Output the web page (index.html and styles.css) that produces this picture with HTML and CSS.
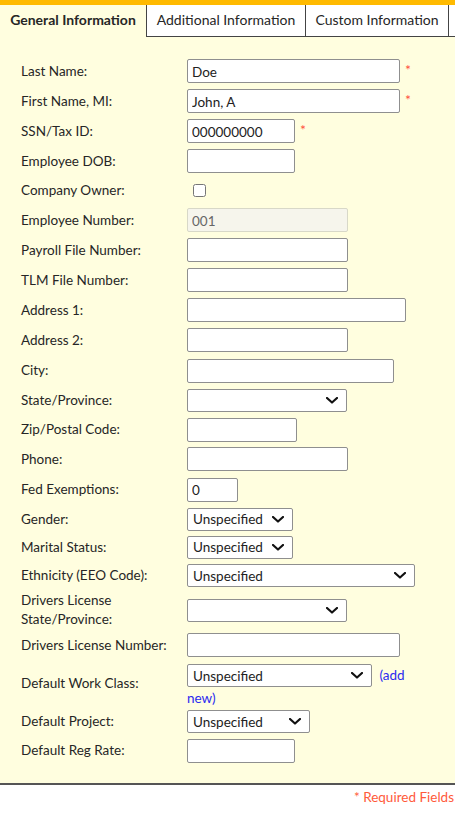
FILE: index.html
```html
<!DOCTYPE html>
<html>
<head>
<meta charset="utf-8">
<link rel="stylesheet" href="styles.css">
</head>
<body>
<div class="topbar"></div>
<div class="panel">
  <div class="tabs">
    <div class="tab active">General Information</div>
    <div class="tab t2">Additional Information</div>
    <div class="tab t3">Custom Information</div>
    <div class="tab t4"></div>
  </div>
  <div class="form">
    <div class="row"><label class="lbl">Last Name:</label><div class="fld"><input class="w-lg" value="Doe"><span class="req">*</span></div></div>
    <div class="row"><label class="lbl">First Name, MI:</label><div class="fld"><input class="w-lg" value="John, A"><span class="req">*</span></div></div>
    <div class="row"><label class="lbl">SSN/Tax ID:</label><div class="fld"><input class="w-sm" value="000000000"><span class="req">*</span></div></div>
    <div class="row"><label class="lbl">Employee DOB:</label><div class="fld"><input class="w-sm"></div></div>
    <div class="row r29"><label class="lbl">Company Owner:</label><div class="fld"><input type="checkbox" class="chk"></div></div>
    <div class="row"><label class="lbl">Employee Number:</label><div class="fld"><input class="w-md" value="001" disabled></div></div>
    <div class="row"><label class="lbl">Payroll File Number:</label><div class="fld"><input class="w-md"></div></div>
    <div class="row"><label class="lbl">TLM File Number:</label><div class="fld"><input class="w-md"></div></div>
    <div class="row"><label class="lbl">Address 1:</label><div class="fld"><input class="w-xl"></div></div>
    <div class="row"><label class="lbl">Address 2:</label><div class="fld"><input class="w-md"></div></div>
    <div class="row r31"><label class="lbl">City:</label><div class="fld"><input class="w-city"></div></div>
    <div class="row r29"><label class="lbl">State/Province:</label><div class="fld"><span class="sel"><select class="w-smd"><option></option></select><svg class="chev" viewBox="0 0 12 7"><path d="M1 1l5 4.5L11 1"/></svg></span></div></div>
    <div class="row r29"><label class="lbl">Zip/Postal Code:</label><div class="fld"><input class="w-zip"></div></div>
    <div class="row"><label class="lbl">Phone:</label><div class="fld"><input class="w-md"></div></div>
    <div class="row r31"><label class="lbl">Fed Exemptions:</label><div class="fld"><input class="w-xs" value="0"></div></div>
    <div class="row r28"><label class="lbl">Gender:</label><div class="fld"><span class="sel"><select class="w-auto"><option>Unspecified</option></select><svg class="chev" viewBox="0 0 12 7"><path d="M1 1l5 4.5L11 1"/></svg></span></div></div>
    <div class="row r28"><label class="lbl">Marital Status:</label><div class="fld"><span class="sel"><select class="w-auto"><option>Unspecified</option></select><svg class="chev" viewBox="0 0 12 7"><path d="M1 1l5 4.5L11 1"/></svg></span></div></div>
    <div class="row r29"><label class="lbl">Ethnicity (EEO Code):</label><div class="fld"><span class="sel"><select class="w-eth"><option>Unspecified</option></select><svg class="chev" viewBox="0 0 12 7"><path d="M1 1l5 4.5L11 1"/></svg></span></div></div>
    <div class="row r40"><label class="lbl">Drivers License<br>State/Province:</label><div class="fld"><span class="sel"><select class="w-smd"><option></option></select><svg class="chev" viewBox="0 0 12 7"><path d="M1 1l5 4.5L11 1"/></svg></span></div></div>
    <div class="row"><label class="lbl">Drivers License Number:</label><div class="fld"><input class="w-lg"></div></div>
    <div class="row r47"><label class="lbl">Default Work Class:</label><div class="fld wrapfld"><span class="sel"><select class="w-wc"><option>Unspecified</option></select><svg class="chev" viewBox="0 0 12 7"><path d="M1 1l5 4.5L11 1"/></svg></span> <a class="addnew" href="#">(add new)</a></div></div>
    <div class="row r29"><label class="lbl">Default Project:</label><div class="fld"><span class="sel"><select class="w-proj"><option>Unspecified</option></select><svg class="chev" viewBox="0 0 12 7"><path d="M1 1l5 4.5L11 1"/></svg></span></div></div>
    <div class="row r29"><label class="lbl">Default Reg Rate:</label><div class="fld"><input class="w-sm"></div></div>
  </div>
</div>
<div class="footer"><span class="reqnote">* Required Fields</span></div>
</body>
</html>
```
FILE: styles.css
```css
html, body {
  margin: 0;
  padding: 0;
  background: #ffffff;
  font-family: Lato, "Open Sans", sans-serif;
  font-size: 13.5px;
  color: #262626;
}
.topbar {
  height: 5px;
  background: #ffba00;
}
.panel {
  background: #fffedf;
  border-bottom: 2px solid #555;
  padding-bottom: 18px;
}
.tabs {
  display: flex;
  height: 32px;
}
.tab {
  box-sizing: border-box;
  height: 32px;
  display: flex;
  align-items: center;
  justify-content: center;
  white-space: nowrap;
  background: #fff;
  border-left: 1px solid #444;
  border-bottom: 1px solid #444;
  padding-bottom: 3px;
  font-size: 14px;
}
.tab.active {
  width: 146px;
  background: transparent;
  border: none;
  font-weight: bold;
}
.tab.t2 { width: 159px; }
.tab.t3 { width: 143px; }
.tab.t4 { flex: 1; }
.form {
  padding: 19px 0 0 21px;
}
.row {
  display: flex;
  align-items: center;
  height: 30px;
}
.r28 { height: 28px; }
.r29 { height: 29px; }
.r31 { height: 31px; }
.r40 { height: 40px; }
.r47 { height: 47px; }
.lbl {
  width: 166px;
  flex: none;
  line-height: 19px;
}
.fld {
  display: flex;
  align-items: flex-start;
}
input, select {
  font-family: inherit;
  font-size: 13.5px;
  color: #222;
  box-sizing: border-box;
  margin: 0;
}
input {
  height: 24px;
  border: 1px solid #8f8f8f;
  border-radius: 2px;
  padding: 1px 4px 0;
  background: #fff;
}
input:disabled {
  background: #f6f5ec;
  color: #666;
  border-color: #d8d8c8;
}
.sel {
  position: relative;
  display: inline-block;
  vertical-align: top;
  height: 23px;
}
select {
  -webkit-appearance: none;
  appearance: none;
  height: 23px;
  border: 1px solid #8f8f8f;
  border-radius: 2px;
  padding: 0 22px 0 5px;
  background: #fff;
  display: block;
}
.chev {
  position: absolute;
  right: 9px;
  top: 8px;
  width: 12px;
  height: 7px;
  pointer-events: none;
}
.chev path {
  fill: none;
  stroke: #111;
  stroke-width: 2.2;
  stroke-linecap: round;
  stroke-linejoin: round;
}
.chk {
  width: 13px;
  height: 13px;
  margin: 0 0 0 6px;
}
.req {
  color: #ff5040;
  font-size: 14px;
  margin: 5px 0 0 5px;
  line-height: 12px;
}
.w-xs { width: 51px; }
.w-sm { width: 108px; }
.w-zip { width: 110px; }
.w-md { width: 161px; }
.w-smd { width: 160px; }
.w-city { width: 207px; }
.w-lg { width: 213px; }
.w-xl { width: 219px; }
.w-auto { width: 106px; }
.w-eth { width: 228px; }
.w-wc { width: 185px; }
.w-proj { width: 123px; }
.wrapfld {
  display: block;
  width: 230px;
  line-height: 22px;
  margin-top: 6px;
}
.addnew {
  color: #2b2bf0;
  text-decoration: none;
  margin-left: 4px;
}
.footer {
  text-align: right;
  padding: 4px 1px 0 0;
}
.reqnote {
  color: #ff5a3a;
  font-size: 13.5px;
}
```
